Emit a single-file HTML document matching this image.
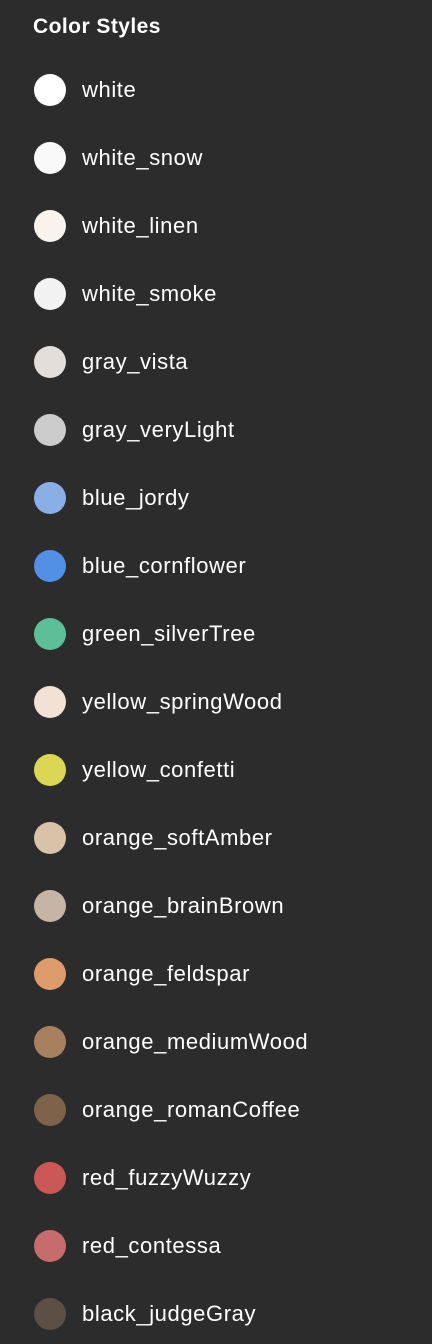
<!DOCTYPE html>
<html><head><meta charset="utf-8"><style>
html,body{margin:0;padding:0;background:#2c2c2c;width:432px;height:1344px;overflow:hidden;font-family:"Liberation Sans",sans-serif;color:#fff}
h1{position:absolute;left:33px;top:13px;margin:0;font-size:21px;font-weight:bold;line-height:28px;letter-spacing:0.45px}
.r{position:absolute;left:34px;height:32px;display:flex;align-items:center}
.c{width:32px;height:32px;border-radius:50%;flex:none}
.t{margin-left:16px;font-size:22px;line-height:32px;letter-spacing:0.6px}
</style></head><body>
<h1>Color Styles</h1>
<div class="r" style="top:74px"><div class="c" style="background:#ffffff"></div><div class="t">white</div></div>
<div class="r" style="top:142px"><div class="c" style="background:#f9f9f9"></div><div class="t">white_snow</div></div>
<div class="r" style="top:210px"><div class="c" style="background:#faf3ec"></div><div class="t">white_linen</div></div>
<div class="r" style="top:278px"><div class="c" style="background:#f2f2f2"></div><div class="t">white_smoke</div></div>
<div class="r" style="top:346px"><div class="c" style="background:#e3ded9"></div><div class="t">gray_vista</div></div>
<div class="r" style="top:414px"><div class="c" style="background:#cccccc"></div><div class="t">gray_veryLight</div></div>
<div class="r" style="top:482px"><div class="c" style="background:#8aaee6"></div><div class="t">blue_jordy</div></div>
<div class="r" style="top:550px"><div class="c" style="background:#5190e4"></div><div class="t">blue_cornflower</div></div>
<div class="r" style="top:618px"><div class="c" style="background:#5dbf98"></div><div class="t">green_silverTree</div></div>
<div class="r" style="top:686px"><div class="c" style="background:#f1e2d5"></div><div class="t">yellow_springWood</div></div>
<div class="r" style="top:754px"><div class="c" style="background:#dcd655"></div><div class="t">yellow_confetti</div></div>
<div class="r" style="top:822px"><div class="c" style="background:#d8c2a8"></div><div class="t">orange_softAmber</div></div>
<div class="r" style="top:890px"><div class="c" style="background:#c6b5a4"></div><div class="t">orange_brainBrown</div></div>
<div class="r" style="top:958px"><div class="c" style="background:#de9b6c"></div><div class="t">orange_feldspar</div></div>
<div class="r" style="top:1026px"><div class="c" style="background:#a7815f"></div><div class="t">orange_mediumWood</div></div>
<div class="r" style="top:1094px"><div class="c" style="background:#7f624a"></div><div class="t">orange_romanCoffee</div></div>
<div class="r" style="top:1162px"><div class="c" style="background:#cc5757"></div><div class="t">red_fuzzyWuzzy</div></div>
<div class="r" style="top:1230px"><div class="c" style="background:#c66c6c"></div><div class="t">red_contessa</div></div>
<div class="r" style="top:1298px"><div class="c" style="background:#5c4f45"></div><div class="t">black_judgeGray</div></div>
</body></html>
